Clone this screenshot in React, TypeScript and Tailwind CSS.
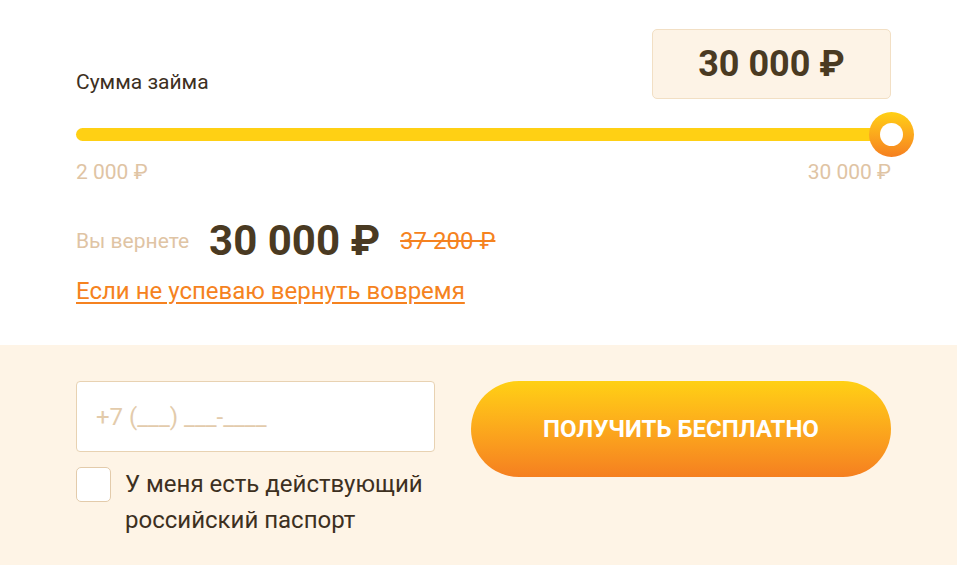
import React from "react";

const font = { fontFamily: "Roboto, 'Noto Sans', sans-serif" };

export default function App() {
  return (
    <div className="w-[957px] h-[565px] bg-white overflow-hidden" style={font}>
      <div className="h-[345px] pl-[76px] pr-[66px] pt-[29px]">
        <div className="flex justify-between items-end">
          <div className="mb-[5px] text-[21px] leading-[24px] text-[#3d301f]">Сумма займа</div>
          <div className="w-[239px] h-[70px] flex items-center justify-center rounded-[5px] border border-[#f2dfc4] bg-[#fdf3e6] text-[36px] font-bold text-[#4a3a22]">
            30 000 ₽
          </div>
        </div>

        <div className="relative mt-[29px] h-[13px] w-[824px] rounded-full bg-[#ffd014]">
          <div className="absolute right-[-14px] top-[-16px] flex h-[45px] w-[45px] items-center justify-center rounded-full bg-gradient-to-b from-[#ffd014] to-[#f57f20]">
            <div className="h-[23px] w-[23px] rounded-full bg-white" />
          </div>
        </div>

        <div className="mt-[19px] flex justify-between text-[21px] leading-[24px] text-[#dfc4a4]">
          <span>2 000 ₽</span>
          <span>30 000 ₽</span>
        </div>

        <div className="mt-[36px] flex items-center h-[42px]">
          <span className="text-[21px] leading-[24px] text-[#dfc4a4]">Вы вернете</span>
          <span className="ml-[20px] text-[42px] leading-[42px] font-bold text-[#4a3a22]">30 000 ₽</span>
          <span className="ml-[20px] text-[24px] leading-[24px] text-[#f58220] line-through">37 200 ₽</span>
        </div>

        <a href="#" className="mt-[13px] block w-fit text-[24px] leading-[32px] text-[#f58220] underline underline-offset-[3px]">
          Если не успеваю вернуть вовремя
        </a>
      </div>

      <div className="h-[220px] bg-[#fef4e6] pl-[76px] pr-[66px] pt-[36px] flex gap-[36px]">
        <div className="w-[359px]">
          <div className="h-[71px] rounded-[4px] border border-[#e8d2b2] bg-white flex items-center pl-[19px] text-[24px] text-[#e3cbab]">
            +7 (___) ___-____
          </div>
          <div className="mt-[14px] flex items-start gap-[14px]">
            <div className="mt-[1px] h-[35px] w-[35px] shrink-0 rounded-[5px] border border-[#e3cbab] bg-white" />
            <div className="text-[24px] leading-[36px] text-[#3d301f]">
              У меня есть действующий
              <br />
              российский паспорт
            </div>
          </div>
        </div>
        <button className="h-[96px] w-[420px] rounded-full bg-gradient-to-b from-[#ffd014] to-[#f57f20] text-[24px] font-bold uppercase text-white">
          Получить бесплатно
        </button>
      </div>
    </div>
  );
}
